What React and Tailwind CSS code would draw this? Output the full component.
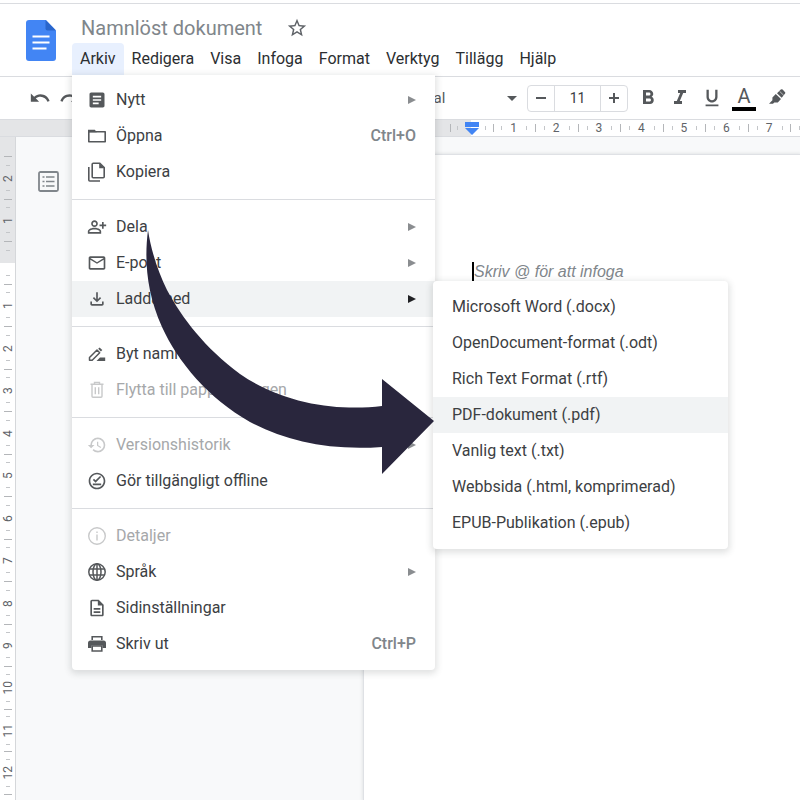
import React from "react";
import {
  MdArticle,
  MdFormatBold,
  MdFormatItalic,
  MdFormatUnderlined,
  MdHistory,
  MdMailOutline,
  MdOutlineDescription,
  MdOutlineFileDownload,
  MdOutlineOfflinePin,
  MdOutlinePersonAddAlt,
  MdRedo,
  MdStarBorder,
  MdUndo,
} from "react-icons/md";

function FolderIcon() {
  return (
    <svg viewBox="0 0 20 20" className="size-5" fill="none" stroke="currentColor" strokeWidth="1.6">
      <path d="M1.800 5.800H18.200V15.800H1.800z" strokeLinejoin="round" />
      <path d="M1 3.800h6.800l2 2.400H1z" fill="currentColor" stroke="none" />
    </svg>
  );
}

function CopyIcon() {
  return (
    <svg viewBox="0 0 20 20" className="size-5" fill="none" stroke="currentColor" strokeWidth="1.6">
      <path d="M6.200 1.200h6.600l4.400 4.400v9.200a1 1 0 0 1-1 1H6.200a1 1 0 0 1-1-1V2.200a1 1 0 0 1 1-1z" />
      <path d="M12.200 1v5.200h5.200z" fill="currentColor" stroke="none" />
      <path d="M1.800 5v13a1 1 0 0 0 1 1H13" />
    </svg>
  );
}

function RenameIcon() {
  return (
    <svg viewBox="0 0 20 20" className="size-5" fill="none" stroke="currentColor" strokeWidth="1.5">
      <path d="M2.500 16.200v-2.700L10 6l2.700 2.700-7.500 7.500z" strokeLinejoin="round" />
      <path d="M11.200 4.800 12.600 3.400l2.700 2.700-1.400 1.400z" fill="currentColor" stroke="none" />
      <path d="M9.500 17l3.500-3.500h5.200V17z" fill="currentColor" stroke="none" />
    </svg>
  );
}

function TrashIcon() {
  return (
    <svg viewBox="0 0 20 20" className="size-5" fill="none" stroke="currentColor" strokeWidth="1.4">
      <path d="M3.500 4.200h13M7.500 4V2.400h5V4M5 4.500v11.700a1 1 0 0 0 1 1h8a1 1 0 0 0 1-1V4.500M8.300 7.300v7M11.700 7.300v7" />
    </svg>
  );
}

function PrintIcon() {
  return (
    <svg viewBox="0 0 20 20" className="size-5" fill="none" stroke="currentColor" strokeWidth="1.6">
      <path d="M5.200 6V2.800h9.600V6" />
      <path d="M3.500 6.500h13A2.500 2.500 0 0 1 19 9v5h-3.500v-2.500h-11V14H1V9a2.500 2.500 0 0 1 2.500-2.500z" fill="currentColor" stroke="none" />
      <path d="M5.200 12h9.600v5H5.200z" />
    </svg>
  );
}

function OutlineIcon() {
  return (
    <svg viewBox="0 0 21 21" className="size-[21px]" fill="none" stroke="currentColor">
      <rect x="1" y="1" width="19" height="19" rx="1.500" strokeWidth="1.800" />
      <path d="M4.500 6h2M4.500 10.500h2M4.500 15h2M8 6h8.500M8 10.500h8.500M8 15h8.500" strokeWidth="1.700" />
    </svg>
  );
}

function GlobeIcon() {
  return (
    <svg viewBox="0 0 20 20" className="size-5" fill="none" stroke="currentColor" strokeWidth="1.500">
      <circle cx="10" cy="10" r="8.200" />
      <ellipse cx="10" cy="10" rx="4" ry="8.200" />
      <path d="M10 1.800v16.400M2.500 7h15M2.500 13h15" />
    </svg>
  );
}

function InfoIcon() {
  return (
    <svg viewBox="0 0 20 20" className="size-5" fill="none" stroke="currentColor" strokeWidth="1.400">
      <circle cx="10" cy="10" r="8.300" />
      <path d="M10 5.500v1.600M10 8.500v6" />
    </svg>
  );
}

function HighlighterIcon() {
  return (
    <svg viewBox="0 0 18 18" className="size-[18px]" fill="currentColor">
      <path d="M7.800 5 13 10 9.800 13.400H6.300L5 14.800H1l3.400-3.600V8.600z" />
      <path d="M9 4.200 12.800.6q.9-.8 1.800 0l2.300 2.300q.9.900 0 1.800L13.700 8.700z" />
      <path d="M11.600 2.300 15.700 6.300" stroke="#fff" strokeWidth=".6" />
    </svg>
  );
}

function DocsLogo() {
  return (
    <svg viewBox="0 0 30 41" className="h-[41px] w-[30px]" aria-label="Dokument">
      <path d="M3 0h17l10 10.500V38a3 3 0 0 1-3 3H3a3 3 0 0 1-3-3V3a3 3 0 0 1 3-3z" fill="#4285f4" />
      <path d="M19.500 0 30 10.500H21.500a2 2 0 0 1-2-2z" fill="#2a66cc" />
      <path d="M6.500 16.500h17M6.500 22.500h17M6.500 28.500h14" stroke="#fff" strokeWidth="2.200" />
    </svg>
  );
}

const fileMenu = [
  [
    { label: "Nytt", icon: <MdArticle />, sub: true },
    { label: "Öppna", icon: <FolderIcon />, keys: "Ctrl+O" },
    { label: "Kopiera", icon: <CopyIcon /> },
  ],
  [
    { label: "Dela", icon: <MdOutlinePersonAddAlt />, sub: true },
    { label: "E-post", icon: <MdMailOutline />, sub: true },
    { label: "Ladda ned", icon: <MdOutlineFileDownload />, sub: true, active: true },
  ],
  [
    { label: "Byt namn", icon: <RenameIcon /> },
    { label: "Flytta till papperskorgen", icon: <TrashIcon />, disabled: true },
  ],
  [
    { label: "Versionshistorik", icon: <MdHistory />, sub: true, disabled: true },
    { label: "Gör tillgängligt offline", icon: <MdOutlineOfflinePin /> },
  ],
  [
    { label: "Detaljer", icon: <InfoIcon />, disabled: true },
    { label: "Språk", icon: <GlobeIcon />, sub: true },
    { label: "Sidinställningar", icon: <MdOutlineDescription /> },
    { label: "Skriv ut", icon: <PrintIcon />, keys: "Ctrl+P" },
  ],
];

const formats = [
  "Microsoft Word (.docx)",
  "OpenDocument-format (.odt)",
  "Rich Text Format (.rtf)",
  "PDF-dokument (.pdf)",
  "Vanlig text (.txt)",
  "Webbsida (.html, komprimerad)",
  "EPUB-Publikation (.epub)",
];

const menuNames = ["Redigera", "Visa", "Infoga", "Format", "Verktyg", "Tillägg", "Hjälp"];

function MenuItem({ item }) {
  return (
    <button
      type="button"
      disabled={item.disabled}
      className={
        "flex h-9 w-full items-center pr-[19px] pl-[15px] text-left " +
        (item.active ? "bg-[#f1f3f4] " : "") +
        (item.disabled ? "text-[#a6a8aa]" : "text-[#3c4043]")
      }
    >
      <span className={"mr-[9px] text-[20px] " + (item.disabled ? "text-[#c8c9ca]" : "text-[#55585b]")}>
        {item.icon}
      </span>
      <span className="grow">{item.label}</span>
      {item.keys && <span className="font-medium text-[#80868b]">{item.keys}</span>}
      {item.sub && (
        <svg viewBox="0 0 8 8" className="size-2">
          <path d="M0 0 8 4 0 8z" fill={item.active ? "#202124" : "#8a8d90"} />
        </svg>
      )}
    </button>
  );
}

function FileMenu() {
  return (
    <div className="absolute top-full left-0 z-10 w-[363px] rounded-b bg-white pt-[7px] pb-2 shadow-[0_2px_6px_2px_rgba(60,64,67,0.15)]">
      {fileMenu.map((group, i) => (
        <div key={i} className={i ? "mt-[9px] border-t border-[#dadce0] pt-[9px]" : ""}>
          {group.map((item) => (
            <MenuItem key={item.label} item={item} />
          ))}
        </div>
      ))}
      <div className="absolute top-[206px] left-[361px] z-10 w-[295px] rounded bg-white py-2 shadow-[0_2px_6px_2px_rgba(60,64,67,0.15)]">
        {formats.map((name) => (
          <button
            key={name}
            type="button"
            className={
              "block h-9 w-full px-[19px] text-left whitespace-nowrap text-[#3c4043] " +
              (name.startsWith("PDF") ? "bg-[#f1f3f4]" : "")
            }
          >
            {name}
          </button>
        ))}
      </div>
      <svg
        viewBox="0 0 290 246"
        className="pointer-events-none absolute top-[153px] left-[74px] z-20 h-[246px] w-[290px]"
      >
        <path
          d="M2 2C-2 34 1 65 16 99C32 134 62 170 104 194C139 213 184 223 236 219V246L288 193L236 151V178C194 183 139 177 94 146C59 120 36 90 21 62C12 44 5 22 2 2Z"
          fill="#29263d"
        />
      </svg>
    </div>
  );
}

function HorizontalRuler() {
  return (
    <div className="flex h-[18px] shrink-0 overflow-hidden border-y border-[#dadce0] bg-[#e4e5e7] pl-[450px]">
      <div className="grid w-[383px] shrink-0 grid-cols-9 bg-[linear-gradient(to_right,#e4e5e7_21px,#fff_21px)] text-[12px] leading-4 text-[#5f6368]">
        {[0, 1, 2, 3, 4, 5, 6, 7, ""].map((n) => (
          <div key={n} className="flex items-center justify-between">
            <span className="h-2 w-px bg-[#b4b6b9]" />
            <span className="h-1 w-px bg-[#c4c6c9]" />
            {n === 0 ? (
              <svg viewBox="0 0 14 13" className="h-[13px] w-[14px]" fill="#4285f4">
                <path d="M0 0h14v5H0zM0 6h14L7 13z" />
              </svg>
            ) : (
              <span className="min-w-2">{n}</span>
            )}
            <span className="h-1 w-px bg-[#c4c6c9]" />
            <span />
          </div>
        ))}
      </div>
    </div>
  );
}

function VerticalRuler() {
  return (
    <div className="w-4 shrink-0 overflow-hidden border-r border-[#d5d7da] bg-[linear-gradient(to_bottom,#e4e5e7_126px,#fff_126px)] pt-[19px]">
      <div className="grid h-[680px] grid-rows-16 text-[12px] leading-4 text-[#5f6368]">
        {[2, 1, 0, 1, 2, 3, 4, 5, 6, 7, 8, 9, 10, 11, 12, 0].map((n, i) => (
          <div key={i} className="flex flex-col items-end justify-between pr-1">
            <span className="h-px w-2 bg-[#b4b6b9]" />
            <span className="mr-[2px] h-px w-1 bg-[#c4c6c9]" />
            <span className="-mr-1 min-h-2 rotate-180 [writing-mode:vertical-rl]">{n || ""}</span>
            <span className="mr-[2px] h-px w-1 bg-[#c4c6c9]" />
            <span />
          </div>
        ))}
      </div>
    </div>
  );
}

function Toolbar() {
  return (
    <div className="flex h-[42px] shrink-0 items-center overflow-hidden bg-white pl-[29px] text-[22px] text-[#55585b]">
      <button type="button" aria-label="Ångra" className="mr-2">
        <MdUndo />
      </button>
      <button type="button" aria-label="Gör om">
        <MdRedo />
      </button>
      <div className="relative ml-[330px] flex w-[106px] items-center">
        <select aria-label="Teckensnitt" className="w-full appearance-none pl-1 text-[15px] text-[#55585b]">
          <option>Arial</option>
        </select>
        <svg viewBox="0 0 10 5" className="pointer-events-none absolute right-0 h-[5px] w-[10px]" fill="#55585b">
          <path d="M0 0h10L5 5z" />
        </svg>
      </div>
      <div className="ml-[10px] flex h-[27px] w-[101px] shrink-0 items-stretch rounded-sm border border-[#dadce0] text-[#3c4043]">
        <button type="button" aria-label="Minska" className="flex w-[26px] items-center justify-center">
          <span className="h-[2px] w-[10px] bg-[#55585b]" />
        </button>
        <input
          aria-label="Teckenstorlek"
          defaultValue="11"
          className="w-[47px] border-x border-[#dadce0] text-center text-[14px]"
        />
        <button type="button" aria-label="Öka" className="flex w-[26px] items-center justify-center">
          <svg viewBox="0 0 10 10" className="size-[10px]" stroke="#55585b" strokeWidth="2">
            <path d="M5 0v10M0 5h10" />
          </svg>
        </button>
      </div>
      <div className="ml-2 flex shrink-0 items-center gap-2">
        <button type="button" aria-label="Fet" className="flex w-6 justify-center">
          <MdFormatBold className="size-6" />
        </button>
        <button type="button" aria-label="Kursiv" className="flex w-6 justify-center">
          <MdFormatItalic className="size-6" />
        </button>
        <button type="button" aria-label="Understruken" className="flex w-6 justify-center">
          <MdFormatUnderlined className="size-[22px]" />
        </button>
        <button
          type="button"
          aria-label="Textfärg"
          className="w-6 border-b-4 border-black text-center text-[20px] leading-[22px]"
        >
          A
        </button>
        <button type="button" aria-label="Markeringsfärg" className="ml-1">
          <HighlighterIcon />
        </button>
      </div>
    </div>
  );
}

export default function App() {
  return (
    <div className="flex h-screen flex-col overflow-hidden bg-white font-[Roboto,'Liberation_Sans',sans-serif] text-[16px]">
      <header className="mt-[3px] flex shrink-0 border-y border-[#dadce0] pb-px pl-[26px]">
        <div className="mt-4 shrink-0">
          <DocsLogo />
        </div>
        <div className="ml-4">
          <div className="mt-2 flex h-[31px] items-center pl-[9px]">
            <h1 className="text-[20px] text-[#80868b]">Namnlöst dokument</h1>
            <button type="button" aria-label="Stjärnmärk" className="ml-6 text-[22px] text-[#5f6368]">
              <MdStarBorder />
            </button>
          </div>
          <nav className="relative flex h-8 items-center whitespace-nowrap text-[#2b2e31]">
            <button type="button" className="h-full rounded-t bg-[#e8f0fe] px-2">
              Arkiv
            </button>
            {menuNames.map((name) => (
              <button key={name} type="button" className="px-2">
                {name}
              </button>
            ))}
            <FileMenu />
          </nav>
        </div>
      </header>
      <Toolbar />
      <HorizontalRuler />
      <main className="flex min-h-0 grow overflow-hidden bg-[#f8f9fa]">
        <VerticalRuler />
        <aside className="w-[347px] shrink-0 pt-[34px] pl-[22px]">
          <button type="button" aria-label="Visa disposition" className="text-[#80868b]">
            <OutlineIcon />
          </button>
        </aside>
        <article className="mt-[17px] grow border-t border-l border-[#dfe1e5] bg-white pt-[107px] pl-[108px] shadow-[0_0_3px_1px_rgba(60,64,67,0.1)]">
          <p className="border-l-2 border-black font-['Liberation_Sans',Arial,sans-serif] text-[16px] leading-[20px] text-[#80868b] italic">
            Skriv @ för att infoga
          </p>
        </article>
      </main>
    </div>
  );
}
